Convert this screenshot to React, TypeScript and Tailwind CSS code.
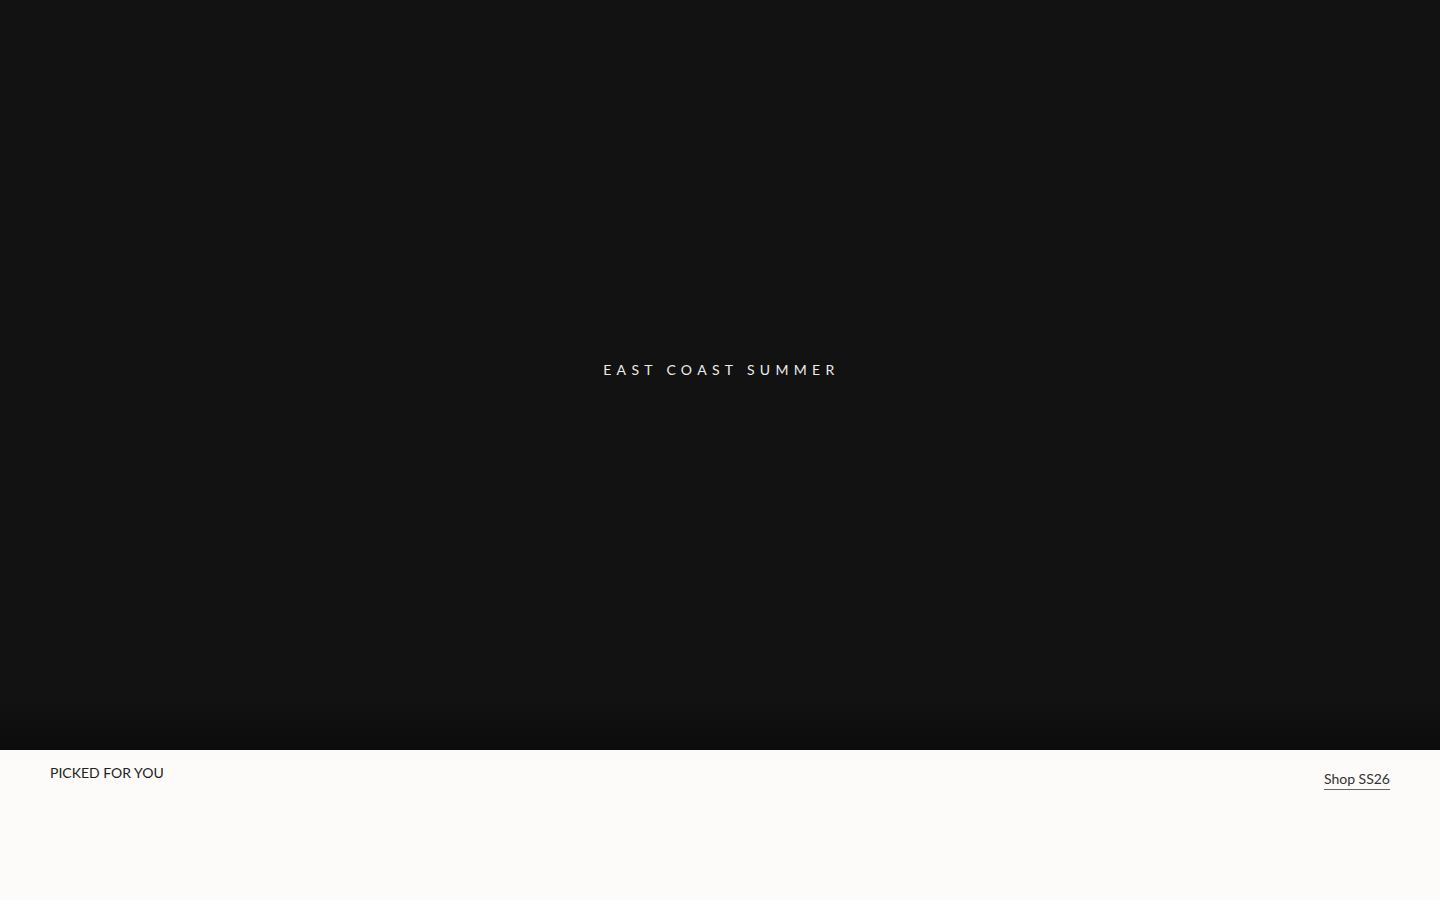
export default function App() {
  return (
    <div className="min-h-screen bg-[#fcfbf9] font-['Lato','Noto_Sans',sans-serif]">
      <section className="relative flex h-[750px] items-center justify-center bg-[#121212]">
        <div className="pointer-events-none absolute inset-x-0 bottom-0 h-[50px] bg-gradient-to-b from-transparent to-[#0c0c0c]" />
        <h1 className="mb-[12px] pl-[0.2em] text-[14px] font-normal tracking-[0.38em] text-[#ebebeb]">
          EAST COAST SUMMER
        </h1>
      </section>
      <section className="h-[150px] px-[50px]">
        <div className="flex items-start justify-between">
          <h2 className="pt-[14px] text-[14px] font-normal leading-[18px] text-[#222222]">
            PICKED FOR YOU
          </h2>
          <a
            href="#"
            className="mt-[20px] border-b border-[#666] pb-[1px] text-[14px] leading-[18px] text-[#333333]"
          >
            Shop SS26
          </a>
        </div>
      </section>
    </div>
  );
}
